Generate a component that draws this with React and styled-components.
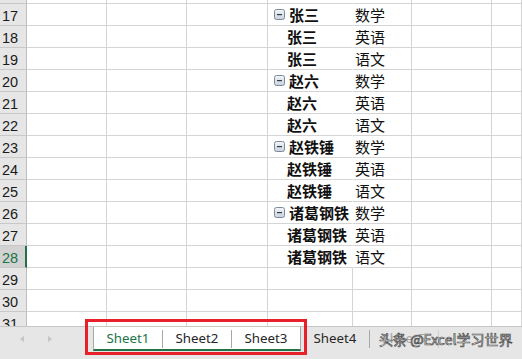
import React from "react";
import styled, { createGlobalStyle } from "styled-components";

const GlobalStyle = createGlobalStyle`
  html, body {
    margin: 0;
    padding: 0;
    background: #fff;
    overflow: hidden;
  }
`;

const Page = styled.div`
  width: 522px;
  height: 359px;
  display: flex;
  flex-direction: column;
  overflow: hidden;
  background: #fff;
`;

const SheetArea = styled.div`
  height: 326px;
  flex: none;
  overflow: hidden;
`;

const Grid = styled.div`
  display: grid;
  grid-template-columns: 27px 80px 80px 81px 85px 59px 80px 1fr;
  grid-auto-rows: 22px;
  margin-top: -18px;
`;

const RowHeader = styled.div`
  box-sizing: border-box;
  background: ${(p) => (p.$selected ? "#d2d2d2" : "#e6e6e6")};
  color: ${(p) => (p.$selected ? "#217346" : "#1a1a1a")};
  border-right: ${(p) => (p.$selected ? "2px solid #217346" : "1px solid #bdbdbd")};
  border-bottom: 1px solid #c8c8c8;
  font-family: "Liberation Sans", Arial, sans-serif;
  font-size: 14.5px;
  display: flex;
  align-items: center;
  padding-left: 2px;
  padding-top: 2px;
`;

const Cell = styled.div`
  box-sizing: border-box;
  border-right: 1px solid ${(p) => (p.$noRight ? "transparent" : "#d4d4d4")};
  border-bottom: 1px solid #d4d4d4;
  display: flex;
  align-items: center;
  font-family: "Noto Sans CJK SC", "Noto Sans", sans-serif;
  font-size: 15px;
  font-weight: ${(p) => (p.$bold ? 700 : 400)};
  color: #111;
  white-space: nowrap;
  overflow: visible;
  padding-left: ${(p) => p.$indent || 0}px;
  gap: 4px;
`;

const TabBar = styled.div`
  position: relative;
  flex: 1;
  border-top: 1px solid #c6c6c6;
  background: #e6e6e6;
  display: flex;
  align-items: flex-start;
`;

const Nav = styled.div`
  width: 93px;
  height: 24px;
  display: flex;
  align-items: center;
  padding-left: 20px;
  gap: 24px;
  box-sizing: border-box;
`;

const Arrow = styled.span`
  width: 0;
  height: 0;
  border-top: 3.5px solid transparent;
  border-bottom: 3.5px solid transparent;
  ${(p) =>
    p.$dir === "left"
      ? "border-right: 4px solid #c4c4c4;"
      : "border-left: 4px solid #c4c4c4;"}
`;

const TabGroup = styled.div`
  position: relative;
  display: flex;
  background: #fff;
  border-left: 1px solid #a8a8a8;
  border-right: 1px solid #a8a8a8;
  border-bottom: 2px solid #217346;

  &::before {
    content: "";
    position: absolute;
    left: -9px;
    right: -7px;
    top: -8px;
    bottom: -6px;
    border: 3px solid #e8202a;
    pointer-events: none;
  }
`;

const Tab = styled.div`
  position: relative;
  width: ${(p) => (p.$last ? 68 : 69)}px;
  height: 22px;
  display: flex;
  align-items: center;
  justify-content: center;
  padding-right: ${(p) => (p.$last ? 0 : 1)}px;
  box-sizing: border-box;
  font-family: "Noto Sans", "Open Sans", sans-serif;
  font-size: 13.3px;
  color: ${(p) => (p.$active ? "#217346" : "#262626")};
  opacity: ${(p) => (p.$hidden ? 0.35 : 1)};
  flex: none;

  &::after {
    content: "";
    display: ${(p) => (p.$last ? "none" : "block")};
    position: absolute;
    right: 0;
    top: 3px;
    bottom: 1px;
    width: 1px;
    background: #a8a8a8;
  }
`;

const Watermark = styled.span`
  position: absolute;
  left: 379px;
  top: 2px;
  white-space: nowrap;
  font-family: "Noto Sans CJK SC", "Noto Sans", sans-serif;
  font-size: 14px;
  color: rgba(255, 255, 255, 0.88);
  -webkit-text-stroke: 0.7px #4a4a4a;
  pointer-events: none;
`;

const CollapseIcon = () => (
  <svg width="11" height="11" viewBox="0 0 11 11">
    <defs>
      <linearGradient id="cg" x1="0" y1="0" x2="0" y2="1">
        <stop offset="0" stopColor="#f4f6f9" />
        <stop offset="1" stopColor="#c9d1dc" />
      </linearGradient>
    </defs>
    <rect x="0.5" y="0.5" width="10" height="10" rx="2" fill="url(#cg)" stroke="#7d8a9c" />
    <rect x="3" y="5" width="5" height="1.2" fill="#2f3b4c" />
  </svg>
);

const pivot = [
  ["张三", "数学", true],
  ["张三", "英语"],
  ["张三", "语文"],
  ["赵六", "数学", true],
  ["赵六", "英语"],
  ["赵六", "语文"],
  ["赵铁锤", "数学", true],
  ["赵铁锤", "英语"],
  ["赵铁锤", "语文"],
  ["诸葛钢铁", "数学", true],
  ["诸葛钢铁", "英语"],
  ["诸葛钢铁", "语文"],
];

function Row({ num, name, subject, first, selected, plain }) {
  return (
    <>
      <RowHeader $selected={selected}>{num}</RowHeader>
      <Cell />
      <Cell />
      <Cell />
      {plain ? (
        <>
          <Cell />
          <Cell />
        </>
      ) : (
        <>
          <Cell $noRight $bold $indent={first ? 6 : 19}>
            {first && <CollapseIcon />}
            {name}
          </Cell>
          <Cell $indent={2}>{subject}</Cell>
        </>
      )}
      <Cell />
      <Cell />
    </>
  );
}

export default function App() {
  return (
    <Page>
      <GlobalStyle />
      <SheetArea>
        <Grid>
          <Row />
          {pivot.map(([name, subject, first], i) => (
            <Row
              key={i}
              num={17 + i}
              name={name}
              subject={subject}
              first={first}
              selected={17 + i === 28}
            />
          ))}
          <Row num={29} plain />
          <Row num={30} plain />
          <Row num={31} plain />
        </Grid>
      </SheetArea>
      <TabBar>
        <Nav>
          <Arrow $dir="left" />
          <Arrow $dir="right" />
        </Nav>
        <TabGroup>
          <Tab $active>Sheet1</Tab>
          <Tab>Sheet2</Tab>
          <Tab $last>Sheet3</Tab>
        </TabGroup>
        <Tab>Sheet4</Tab>
        <Tab $hidden>Sheet5</Tab>
        <Watermark>头条 @Excel学习世界</Watermark>
      </TabBar>
    </Page>
  );
}
